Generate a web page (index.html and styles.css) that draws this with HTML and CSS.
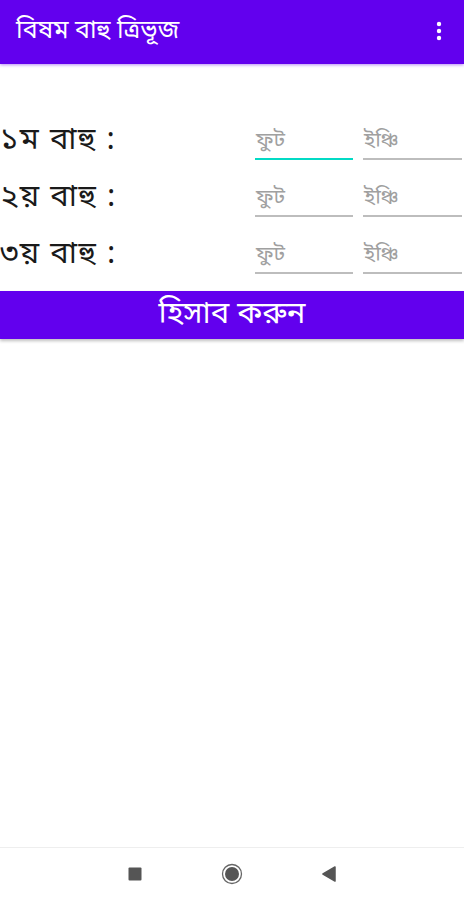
FILE: index.html
```html
<!DOCTYPE html>
<html lang="bn">
<head>
<meta charset="utf-8">
<link rel="stylesheet" href="styles.css">
</head>
<body>
<div class="screen">
  <header class="appbar">
    <span class="title">বিষম বাহু ত্রিভূজ</span>
    <svg class="menu" width="6" height="20" viewBox="0 0 6 20"><circle cx="3" cy="3" r="2.2" fill="#fff"/><circle cx="3" cy="10" r="2.2" fill="#fff"/><circle cx="3" cy="17" r="2.2" fill="#fff"/></svg>
  </header>
  <main class="content">
    <div class="rows">
      <div class="row">
        <span class="label">১ম বাহু :</span>
        <div class="field active"><span class="ph">ফুট</span></div>
        <div class="field"><span class="ph">ইঞ্চি</span></div>
      </div>
      <div class="row">
        <span class="label">২য় বাহু :</span>
        <div class="field"><span class="ph">ফুট</span></div>
        <div class="field"><span class="ph">ইঞ্চি</span></div>
      </div>
      <div class="row">
        <span class="label">৩য় বাহু :</span>
        <div class="field"><span class="ph">ফুট</span></div>
        <div class="field"><span class="ph">ইঞ্চি</span></div>
      </div>
    </div>
    <button class="calc">হিসাব করুন</button>
  </main>
  <nav class="navbar">
    <svg width="14" height="14" viewBox="0 0 14 14"><rect x="0.5" y="0.5" width="13" height="13" rx="1" fill="#555"/></svg>
    <svg width="22" height="22" viewBox="0 0 22 22"><circle cx="11" cy="11" r="9.5" fill="none" stroke="#666" stroke-width="1.3"/><circle cx="11" cy="11" r="7" fill="#555"/></svg>
    <svg width="14" height="16" viewBox="0 0 14 16"><path d="M13 1 L1 8 L13 15 Z" fill="#555" stroke="#555" stroke-linejoin="round" stroke-width="1.5"/></svg>
  </nav>
</div>
</body>
</html>
```
FILE: styles.css
```css
* { box-sizing: border-box; }
html, body { margin: 0; padding: 0; background: #fff; }
body { font-family: "Noto Sans Bengali", "Noto Serif Bengali", "Lohit Bengali", "Noto Sans", sans-serif; }
.screen { width: 464px; height: 900px; display: flex; flex-direction: column; }
.appbar {
  height: 64px; background: #6200ee; color: #fff;
  display: flex; align-items: center; justify-content: space-between;
  padding: 0 22px 0 16px;
  box-shadow: 0 1px 3px rgba(98,0,238,0.45);
  position: relative; z-index: 1;
  flex-shrink: 0;
}
.title { font-size: 25px; line-height: 1; margin-top: -2px; }
.menu { margin-top: -2px; }
.content { flex: 1; padding-top: 39px; }
.rows { display: flex; flex-direction: column; }
.row { display: flex; align-items: flex-end; height: 57px; }
.label { flex: 0 0 255px; font-size: 31px; letter-spacing: 1.5px; color: #1a1a1a; line-height: 1; padding-bottom: 3px; white-space: nowrap; }
.field { flex: 0 0 98px; height: 40px; border-bottom: 2px solid #bdbdbd; display: flex; align-items: flex-end; padding-bottom: 5px; }
.field + .field { margin-left: 10px; flex-basis: 99px; }
.field.active { border-bottom: 2px solid #03dac5; }
.ph { font-size: 21px; color: #a0a0a0; line-height: 1; padding-left: 1px; }
.calc {
  display: block; width: 100%; height: 48px; margin-top: 17px;
  background: #6200ee; color: #fff; border: 0;
  font-family: inherit; font-size: 31px; line-height: 1;
  box-shadow: 0 2px 3px rgba(0,0,0,0.25);
}
.navbar {
  height: 53px; border-top: 1px solid #eee; flex-shrink: 0;
  display: flex; justify-content: center; align-items: center; gap: 79px;
}
```
